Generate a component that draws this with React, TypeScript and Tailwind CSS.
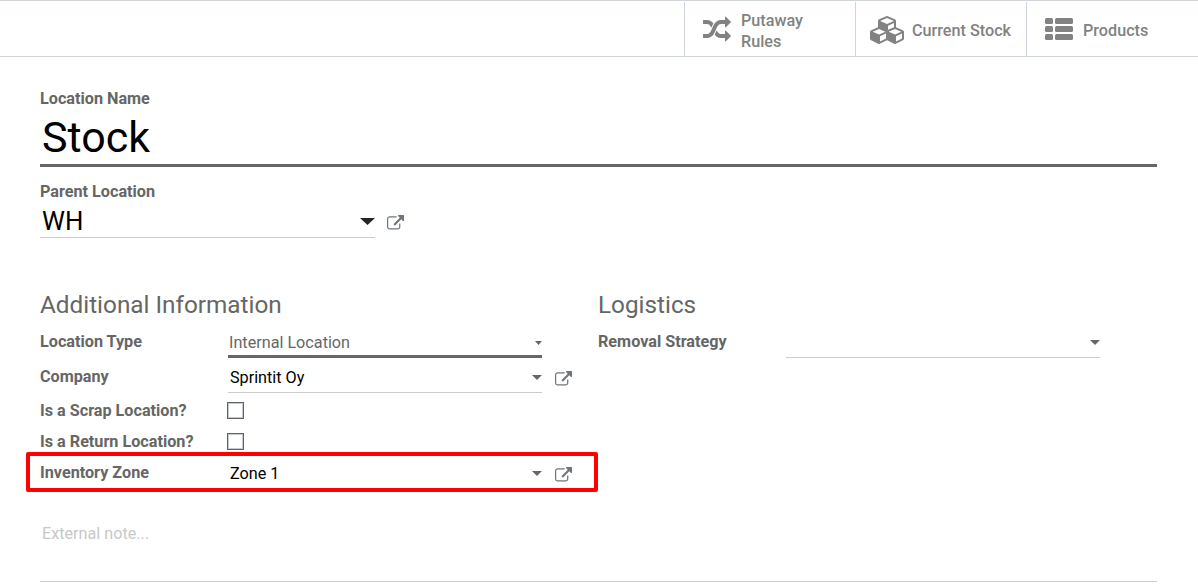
import type { ReactNode } from 'react';

function RandomIcon() {
  return (
    <svg className="h-7 w-7 shrink-0" viewBox="0 0 1792 1792" fill="currentColor">
      <path d="M666 481q-60 92-137 273-22-45-37-72.5t-40.5-63.5-51-56.5-63-35-81.5-14.5h-224q-14 0-23-9t-9-23v-192q0-14 9-23t23-9h224q250 0 410 225zm1126 799q0 14-9 23l-320 320q-9 9-23 9-13 0-22.5-9.5t-9.5-22.5v-192q-32 0-85 .5t-81 1-73-1-71-5-64-10.5-63-18.5-58-28.5-59-40-55-53.5-56-69.5q59-93 136-273 22 45 37 72.5t40.5 63.5 51 56.5 63 35 81.5 14.5h256v-192q0-14 9-23t23-9q12 0 24 10l319 319q9 9 9 23zm0-896q0 14-9 23l-320 320q-9 9-23 9-13 0-22.5-9.5t-9.5-22.5v-192h-256q-48 0-87 15t-69 45-51 61.5-45 77.5q-32 62-78 171-29 66-49.5 111t-54 105-64 100-74 83-90 68.5-106.5 42-128 16.5h-224q-14 0-23-9t-9-23v-192q0-14 9-23t23-9h224q48 0 87-15t69-45 51-61.5 45-77.5q32-62 78-171 29-66 49.5-111t54-105 64-100 74-83 90-68.5 106.5-42 128-16.5h256v-192q0-14 9-23t23-9q12 0 24 10l319 319q9 9 9 23z" />
    </svg>
  );
}

function CubesIcon() {
  return (
    <svg className="h-7 w-[34px] shrink-0" viewBox="0 0 2176 1792" fill="currentColor">
      <path d="M640 1632l384-192v-314l-384 164v342zm-64-454l404-173-404-173-404 173zm1088 454l384-192v-314l-384 164v342zm-64-454l404-173-404-173-404 173zm-448-293l384-165v-266l-384 164v267zm-64-379l441-189-441-189-441 189zm1088 518v416q0 36-19 67t-52 47l-448 224q-25 14-57 14t-57-14l-448-224q-4-2-7-4-2 2-7 4l-448 224q-25 14-57 14t-57-14l-448-224q-33-16-52-47t-19-67v-416q0-38 21.5-70t56.5-48l434-186v-400q0-38 21.5-70t56.5-48l448-192q23-10 50-10t50 10l448 192q35 16 56.5 48t21.5 70v400l434 186q36 16 57 48t21 70z" />
    </svg>
  );
}

function ListIcon() {
  return (
    <svg className="h-7 w-7 shrink-0" viewBox="0 0 28 28" fill="currentColor">
      {[2, 10, 18].map((y) => (
        <g key={y}>
          <rect x="0" y={y} width="8" height="6" rx="1.5" />
          <rect x="10" y={y} width="18" height="6" rx="1.5" />
        </g>
      ))}
    </svg>
  );
}

function ExternalLink({ className }: { className: string }) {
  return (
    <svg className={`h-[17px] w-[17px] shrink-0 text-[#6c757d] ${className}`} viewBox="0 0 1792 1792" fill="currentColor">
      <path d="M1408 928v320q0 119-84.5 203.5t-203.5 84.5h-832q-119 0-203.5-84.5t-84.5-203.5v-832q0-119 84.5-203.5t203.5-84.5h704q14 0 23 9t9 23v64q0 14-9 23t-23 9h-704q-66 0-113 47t-47 113v832q0 66 47 113t113 47h832q66 0 113-47t47-113v-320q0-14 9-23t23-9h64q14 0 23 9t9 23zm384-864v512q0 26-19 45t-45 19-45-19l-176-176-652 652q-10 10-23 10t-23-10l-114-114q-10-10-10-23t10-23l652-652-176-176q-19-19-19-45t19-45 45-19h512q26 0 45 19t19 45z" />
    </svg>
  );
}

function Caret({ className }: { className: string }) {
  return (
    <svg className={`shrink-0 ${className}`} viewBox="0 0 10 5" preserveAspectRatio="none" fill="currentColor">
      <path d="M0 0h10L5 5z" />
    </svg>
  );
}

function StatButton({ icon, gap, children }: { icon: ReactNode; gap: string; children: ReactNode }) {
  return (
    <button className={`flex h-[54px] w-[171px] items-center border-l border-[#ced4da] pt-0.5 text-left font-medium leading-[21px] text-[#828282] ${gap}`}>
      {icon}
      {children}
    </button>
  );
}

function Label({ children }: { children: ReactNode }) {
  return <label className="w-[188px] shrink-0 pt-px font-bold leading-5 text-[#666]">{children}</label>;
}

function Checkbox() {
  return <span role="checkbox" aria-checked="false" className="-ml-px mt-0.5 h-[17px] w-[17px] border border-[#5f6368] bg-white shadow-[inset_0_0_0_1px_#c5c9d0]" />;
}

export default function App() {
  return (
    <div className="h-[588px] w-[1198px] overflow-hidden bg-white font-['Roboto',sans-serif] text-[16.2px] text-[#666]">
      <header className="flex h-[57px] w-full justify-end border-y border-[#ced4da] pr-px pt-px">
        <StatButton gap="gap-2.5 pl-[18px]" icon={<RandomIcon />}>
          <span className="pt-0.5">
            Putaway
            <br />
            Rules
          </span>
        </StatButton>
        <StatButton gap="gap-2 pl-3.5 whitespace-nowrap" icon={<CubesIcon />}>
          <span>Current Stock</span>
        </StatButton>
        <StatButton gap="gap-2.5 pl-[18px]" icon={<ListIcon />}>
          <span>Products</span>
        </StatButton>
      </header>

      <main className="ml-10 w-[1117px]">
        <section className="h-[231px] pt-8">
          <div className="h-[19px] font-bold leading-5">Location Name</div>
          <div className="h-[59px] border-b-[3px] border-[#666] pl-0.5 text-[43px] leading-[58px] text-black">Stock</div>
          <div className="mt-[15px] h-[19px] font-bold leading-5">Parent Location</div>
          <div className="flex">
            <div className="flex h-[37px] w-[335px] justify-between border-b border-[#ccc] pl-0.5 text-[25.8px] leading-10 text-black">
              <span>WH</span>
              <Caret className="mt-[17px] h-[7px] w-[15px] text-[#212529]" />
            </div>
            <ExternalLink className="ml-3 mt-3.5" />
          </div>
        </section>

        <div className="flex h-[222px]">
          <section className="w-[558px]">
            <h2 className="h-[43px] text-[24.3px] leading-[34px]">Additional Information</h2>
            <div className="flex h-[35px]">
              <Label>Location Type</Label>
              <div className="flex h-[27px] w-[314px] justify-between border-b-[3px] border-[#666] pl-px leading-[23px]">
                <span>Internal Location</span>
                <Caret className="mt-2.5 h-1 w-[7px]" />
              </div>
            </div>
            <div className="flex h-[34px]">
              <Label>Company</Label>
              <div className="flex h-[27px] w-[314px] justify-between border-b border-[#ccc] pl-0.5 leading-[23px] text-black">
                <span>Sprintit Oy</span>
                <Caret className="mt-[9px] h-[5px] w-2.5 text-[#666]" />
              </div>
              <ExternalLink className="ml-[13px] mt-[5px]" />
            </div>
            <div className="flex h-[31px]">
              <Label>Is a Scrap Location?</Label>
              <Checkbox />
            </div>
            <div className="flex h-[31px]">
              <Label>Is a Return Location?</Label>
              <Checkbox />
            </div>
            <div className="relative flex h-[34px]">
              <Label>Inventory Zone</Label>
              <div className="flex h-[27px] w-[314px] justify-between pl-0.5 leading-[23px] text-black">
                <span>Zone 1</span>
                <Caret className="mt-[9px] h-[5px] w-2.5 text-[#666]" />
              </div>
              <ExternalLink className="ml-[13px] mt-[5px]" />
              <div className="absolute -left-3.5 -top-2.5 h-10 w-[572px] rounded-[2px] border-4 border-[#f00]" />
            </div>
          </section>

          <section className="w-[502px]">
            <h2 className="h-[43px] text-[24.3px] leading-[34px]">Logistics</h2>
            <div className="flex">
              <Label>Removal Strategy</Label>
              <div className="flex h-[27px] w-[314px] justify-end border-b border-[#ccc]">
                <Caret className="mt-[9px] h-[5px] w-2.5" />
              </div>
            </div>
          </section>
        </div>

        <div className="h-[72px] border-b border-[#ccc] pl-0.5 pt-3 leading-[23px] text-[#c8c8c8]">External note...</div>
      </main>
    </div>
  );
}
